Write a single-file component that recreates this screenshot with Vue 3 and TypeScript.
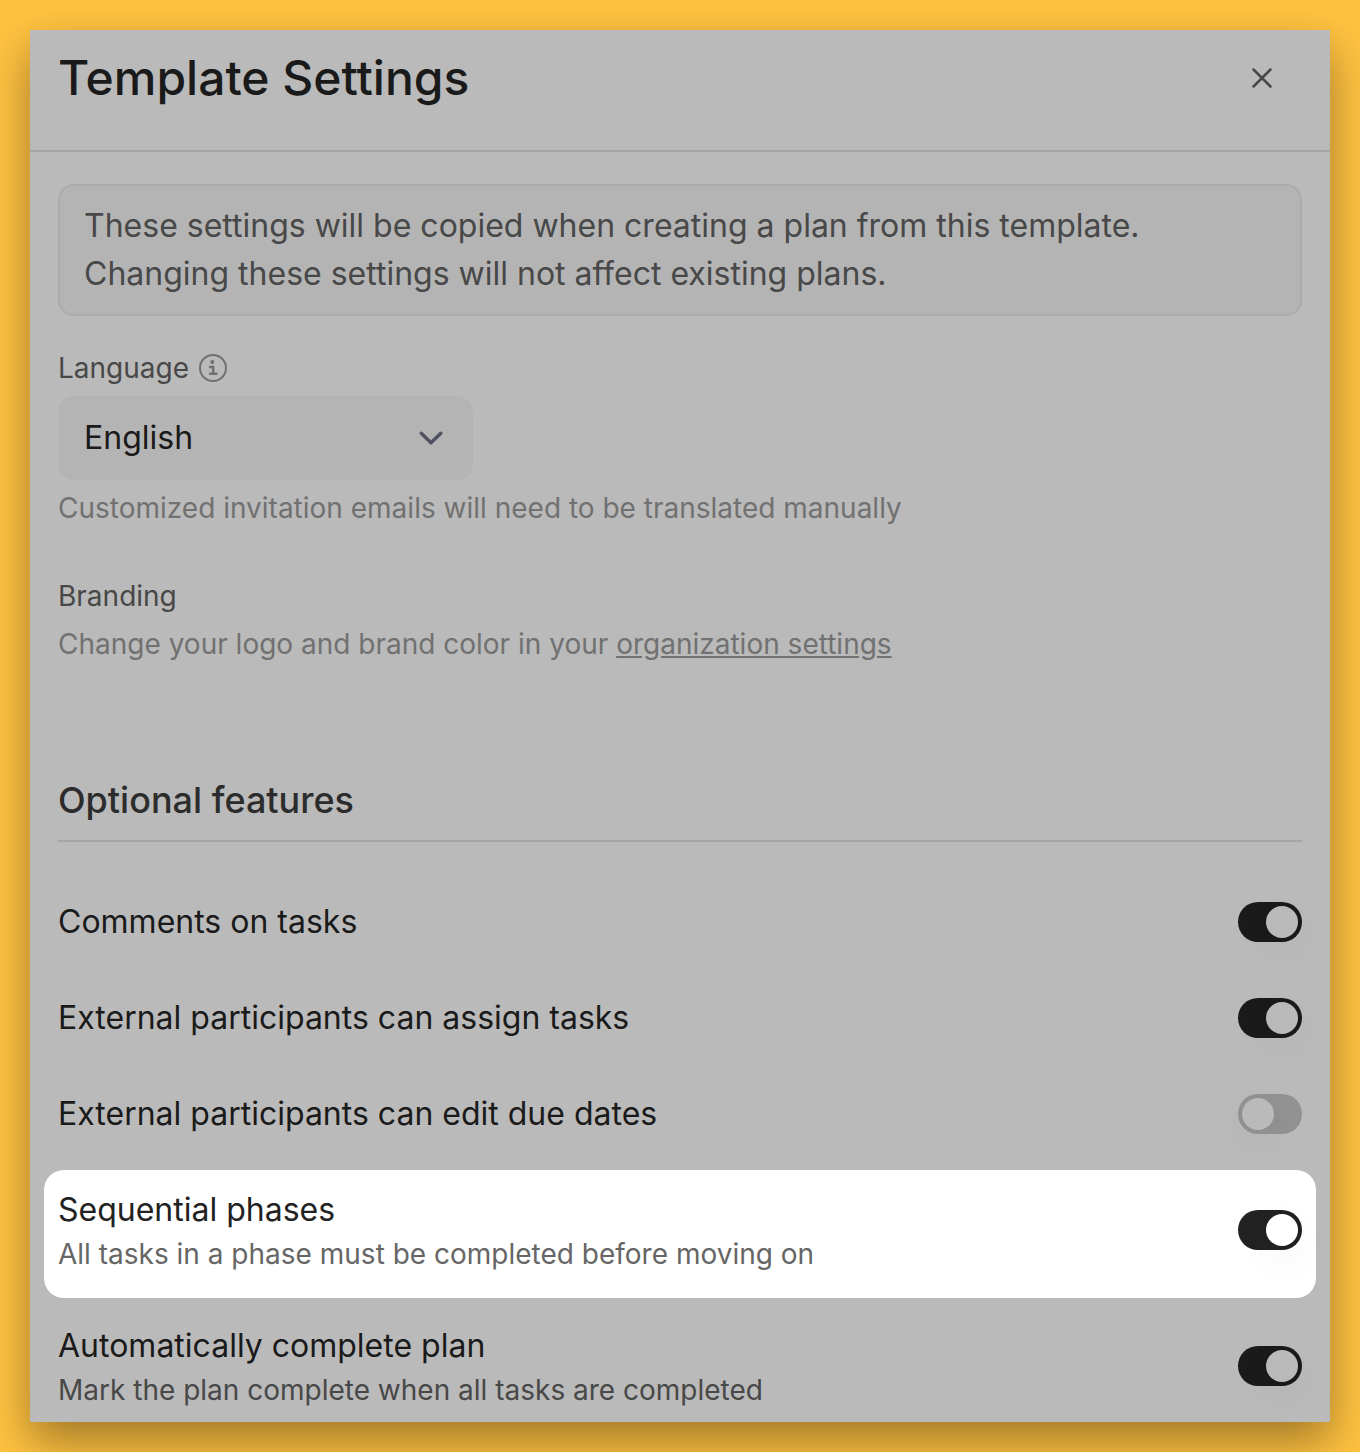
<script setup lang="ts">
import { ref } from 'vue'

interface Feature {
  id: string
  label: string
  description?: string
  enabled: boolean
  highlighted?: boolean
}

const language = ref('en')

const features = ref<Feature[]>([
  { id: 'comments', label: 'Comments on tasks', enabled: true },
  { id: 'assign', label: 'External participants can assign tasks', enabled: true },
  { id: 'due-dates', label: 'External participants can edit due dates', enabled: false },
  {
    id: 'sequential',
    label: 'Sequential phases',
    description: 'All tasks in a phase must be completed before moving on',
    enabled: true,
    highlighted: true,
  },
  {
    id: 'auto-complete',
    label: 'Automatically complete plan',
    description: 'Mark the plan complete when all tasks are completed',
    enabled: true,
  },
])
</script>

<template>
  <main class="page">
    <section class="dialog" role="dialog" aria-labelledby="dialog-title">
      <header class="header">
        <h1 id="dialog-title" class="title">Template Settings</h1>
        <button class="close" type="button" aria-label="Close">
          <svg width="24" height="24" viewBox="0 0 24 24" fill="none" stroke="currentColor" stroke-width="2.5" stroke-linecap="round">
            <path d="M3.5 3.5l17 17M20.5 3.5l-17 17" />
          </svg>
        </button>
      </header>

      <div class="body">
        <p class="note">
          These settings will be copied when creating a plan from this template.<br />
          Changing these settings will not affect existing plans.
        </p>

        <div class="field">
          <div class="label-row">
            <label class="label" for="language">Language</label>
            <svg class="info" width="32" height="32" viewBox="0 0 32 32" fill="none" stroke="currentColor" stroke-width="2" aria-hidden="true">
              <circle cx="16" cy="16" r="13" />
              <path d="M13 15h3.2v6.7M13 21.700h6.500" stroke-width="2.4" stroke-linecap="round" />
              <circle cx="15.3" cy="10" r="2" fill="currentColor" stroke="none" />
            </svg>
          </div>
          <div class="select-wrap">
            <select id="language" v-model="language" class="select">
              <option value="en">English</option>
            </select>
            <svg class="chevron" width="28" height="28" viewBox="0 0 28 28" fill="none" stroke="currentColor" stroke-width="3.4" stroke-linecap="round" stroke-linejoin="round" aria-hidden="true">
              <path d="M4.200 9.200l9.800 9.600 9.800-9.600" />
            </svg>
          </div>
          <p class="hint">Customized invitation emails will need to be translated manually</p>
        </div>

        <div class="field branding">
          <h2 class="label">Branding</h2>
          <p class="hint">
            Change your logo and brand color in your <a class="link" href="#">organization settings</a>
          </p>
        </div>

        <h2 class="section-title">Optional features</h2>

        <ul class="features">
          <li
            v-for="feature in features"
            :key="feature.id"
            class="feature"
            :class="{ highlighted: feature.highlighted }"
          >
            <div class="feature-text">
              <label class="feature-label" :for="feature.id">{{ feature.label }}</label>
              <p v-if="feature.description" class="feature-description">{{ feature.description }}</p>
            </div>
            <input :id="feature.id" v-model="feature.enabled" class="toggle" type="checkbox" role="switch" />
          </li>
        </ul>
      </div>
    </section>
  </main>
</template>

<style>
body {
  background: #ffc240;
}
</style>

<style scoped>
.page {
  padding: 30px;
  font-family: Inter, "Liberation Sans", sans-serif;
  font-size: 32px;
  line-height: 48px;
  color: #1a1a1a;
}

.page * {
  box-sizing: border-box;
}

h1,
h2,
p,
ul {
  margin: 0;
  padding: 0;
}

.dialog {
  background: #bababa;
  box-shadow: 0 20px 42px rgba(0, 0, 0, 0.37);
}

.header {
  display: flex;
  align-items: center;
  justify-content: space-between;
  padding: 16px 44px 40px 28px;
  border-bottom: 2px solid #a6a6a6;
}

.title {
  font-size: 48px;
  line-height: 64px;
  font-weight: 500;
}

.close {
  display: flex;
  align-items: center;
  justify-content: center;
  width: 48px;
  height: 48px;
  padding: 0;
  border: 0;
  background: none;
  color: #484848;
  cursor: pointer;
}

.body {
  padding: 32px 28px 12px;
}

.note {
  padding: 16px 24px;
  border: 2px solid #ababab;
  border-radius: 16px;
  background: #b4b4b4;
  color: #484848;
}

.field {
  margin-top: 32px;
  font-size: 28px;
  line-height: 40px;
}

.branding {
  margin-top: 48px;
}

.label-row {
  display: flex;
  align-items: center;
  gap: 8px;
}

.label {
  font-size: 28px;
  font-weight: 400;
  color: #484848;
}

.info {
  color: #717171;
}

.select-wrap {
  display: grid;
  align-items: center;
  width: 415px;
  max-width: 100%;
  margin-top: 8px;
}

.select {
  grid-area: 1 / 1;
  width: 100%;
  height: 84px;
  padding: 0 64px 0 26px;
  border: 0;
  border-radius: 16px;
  appearance: none;
  background: #b4b4b4;
  font: inherit;
  font-size: 32px;
  color: #1a1a1a;
}

.chevron {
  grid-area: 1 / 1;
  justify-self: end;
  margin-right: 28px;
  color: #50535f;
  pointer-events: none;
}

.hint {
  margin-top: 8px;
  color: #717171;
}

.link {
  color: inherit;
}

.section-title {
  margin-top: 112px;
  padding-bottom: 16px;
  border-bottom: 2px solid #a6a6a6;
  font-size: 36px;
  font-weight: 500;
  color: #2c2c2c;
}

.features {
  margin-top: 32px;
  list-style: none;
}

.feature {
  display: flex;
  align-items: center;
  justify-content: space-between;
  gap: 24px;
  padding: 24px 0;
}

.feature:last-child {
  padding-bottom: 0;
}

.feature-label {
  display: block;
}

.feature-description {
  font-size: 28px;
  line-height: 40px;
  color: #484848;
}

.highlighted {
  margin: 8px -14px 0;
  padding: 16px 14px 24px;
  border-radius: 20px;
  background: #ffffff;
  color: #222222;
}

.highlighted .feature-description {
  color: #666666;
}

.toggle {
  flex: none;
  width: 64px;
  height: 40px;
  margin: 0;
  padding: 4px;
  border-radius: 20px;
  appearance: none;
  background: #929292;
  cursor: pointer;
}

.toggle::before {
  content: "";
  display: block;
  width: 32px;
  height: 32px;
  border-radius: 50%;
  background: #bababa;
  box-shadow: 0 12px 40px rgba(0, 0, 0, 0.06);
}

.toggle:checked {
  background: #1a1a1a;
}

.toggle:checked::before {
  margin-left: 24px;
}

.highlighted .toggle:checked {
  background: #222222;
}

.highlighted .toggle::before {
  background: #ffffff;
}
</style>
